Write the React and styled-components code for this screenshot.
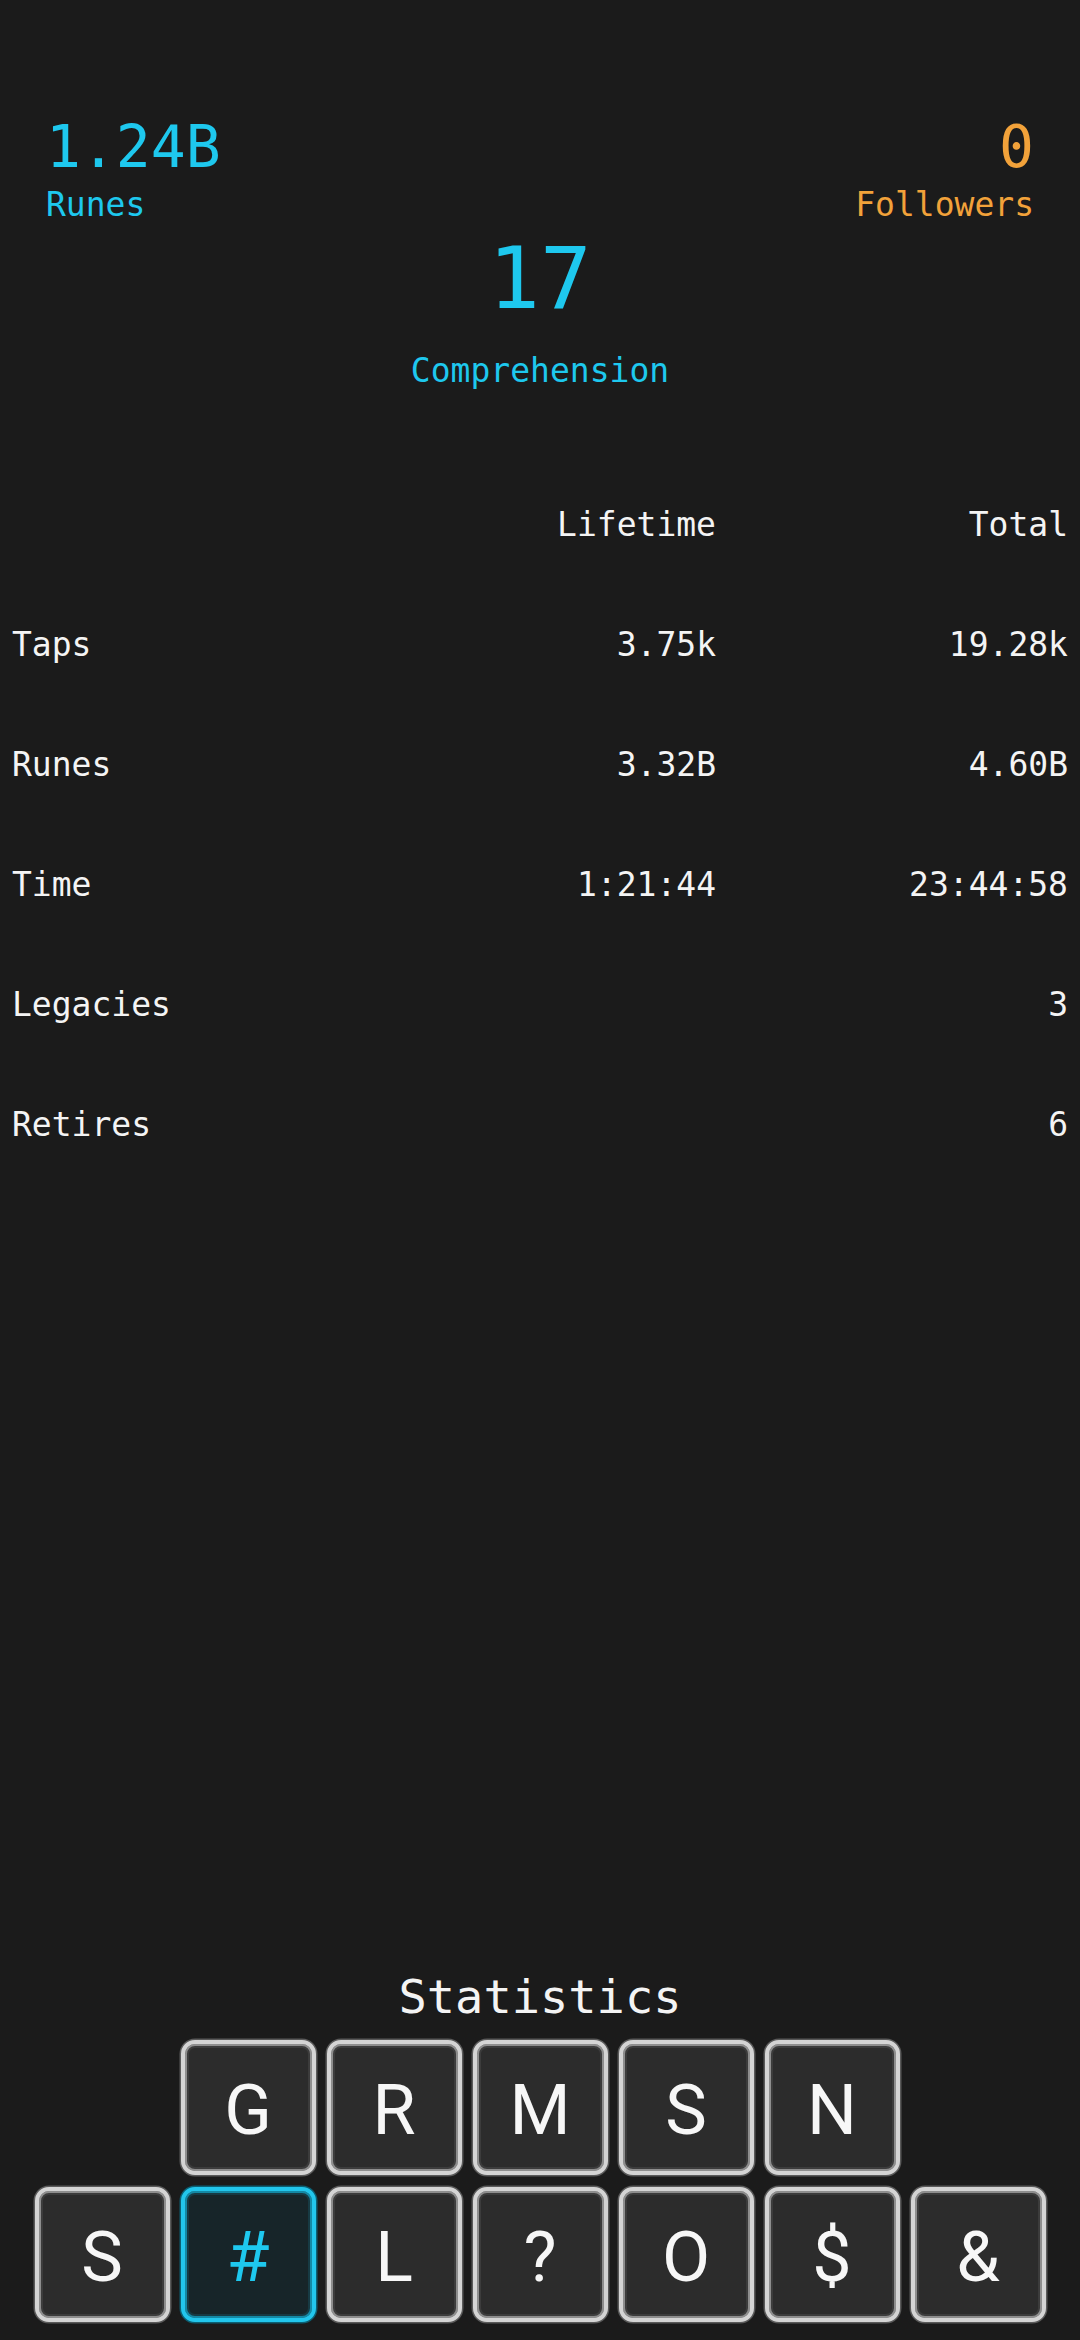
import React from "react";
import styled, { createGlobalStyle } from "styled-components";

const CYAN = "#1ec8ee";
const ORANGE = "#f2a23a";

const GlobalStyle = createGlobalStyle`
  html, body {
    margin: 0;
    padding: 0;
    background: #1b1b1b;
  }
  body {
    font-family: "DejaVu Sans Mono", "Liberation Mono", monospace;
    color: #f2f2f2;
  }
`;

const Screen = styled.div`
  min-height: 2340px;
  display: flex;
  flex-direction: column;
  box-sizing: border-box;
  padding-top: 118px;
`;

const TopRow = styled.div`
  display: flex;
  justify-content: space-between;
  padding: 0 46px 0 46px;
`;

const Stat = styled.div`
  display: flex;
  flex-direction: column;
  align-items: ${(p) => (p.$align === "right" ? "flex-end" : p.$align === "center" ? "center" : "flex-start")};
  gap: ${(p) => p.$gap || 12}px;
  color: ${(p) => p.$color};
`;

const Value = styled.div`
  font-size: ${(p) => p.$size}px;
  line-height: 1;
`;

const Label = styled.div`
  font-size: 33px;
  line-height: 1;
`;

const Center = styled.div`
  margin-top: 14px;
  display: flex;
  justify-content: center;
`;

const Table = styled.div`
  margin-top: 77px;
  padding: 0 12px;
  display: flex;
  flex-direction: column;
`;

const Row = styled.div`
  display: grid;
  grid-template-columns: 1fr 1fr 1fr;
  align-items: center;
  height: 120px;
  font-size: 33px;
  line-height: 1;
  color: #f4f4f4;
`;

const Cell = styled.div`
  text-align: ${(p) => (p.$right ? "right" : "left")};
`;

const Spacer = styled.div`
  flex: 1;
`;

const Footer = styled.div`
  display: flex;
  flex-direction: column;
  align-items: center;
  padding-bottom: 18px;
`;

const Title = styled.div`
  font-size: 47px;
  line-height: 1;
  color: #f4f4f4;
  margin-bottom: 20px;
`;

const KeyRow = styled.div`
  display: flex;
  gap: 11px;
  & + & {
    margin-top: 12px;
  }
`;

const Key = styled.button`
  width: 135px;
  height: 135px;
  box-sizing: border-box;
  border-radius: 14px;
  border: 4px solid ${(p) => (p.$active ? "#22c6ec" : "#d4d4d4")};
  background: ${(p) => (p.$active ? "#172529" : "#2c2c2c")};
  box-shadow: 0 0 0 1.5px ${(p) => (p.$active ? "#0d5f72" : "#5a5a5a")},
    inset 0 0 0 2px ${(p) => (p.$active ? "#1489a5" : "#8e8e8e")},
    inset 0 0 0 4px ${(p) => (p.$active ? "#173a43" : "#3c3c3c")};
  color: ${(p) => (p.$active ? CYAN : "#f7f7f7")};
  font-family: Roboto, "Noto Sans", sans-serif;
  font-size: 70px;
  line-height: 1;
  padding: 4px 0 0;
  display: flex;
  align-items: center;
  justify-content: center;
  cursor: pointer;
`;

const rows = [
  ["Taps", "3.75k", "19.28k"],
  ["Runes", "3.32B", "4.60B"],
  ["Time", "1:21:44", "23:44:58"],
  ["Legacies", "", "3"],
  ["Retires", "", "6"],
];

const topKeys = ["G", "R", "M", "S", "N"];
const bottomKeys = ["S", "#", "L", "?", "O", "$", "&"];

export default function App() {
  return (
    <>
      <GlobalStyle />
      <Screen>
        <TopRow>
          <Stat $color={CYAN}>
            <Value $size={58}>1.24B</Value>
            <Label>Runes</Label>
          </Stat>
          <Stat $color={ORANGE} $align="right">
            <Value $size={58}>0</Value>
            <Label>Followers</Label>
          </Stat>
        </TopRow>
        <Center>
          <Stat $color={CYAN} $align="center" $gap={33}>
            <Value $size={86}>17</Value>
            <Label>Comprehension</Label>
          </Stat>
        </Center>

        <Table>
          <Row>
            <Cell />
            <Cell $right>Lifetime</Cell>
            <Cell $right>Total</Cell>
          </Row>
          {rows.map(([name, life, total]) => (
            <Row key={name}>
              <Cell>{name}</Cell>
              <Cell $right>{life}</Cell>
              <Cell $right>{total}</Cell>
            </Row>
          ))}
        </Table>

        <Spacer />

        <Footer>
          <Title>Statistics</Title>
          <KeyRow>
            {topKeys.map((k, i) => (
              <Key key={i}>{k}</Key>
            ))}
          </KeyRow>
          <KeyRow>
            {bottomKeys.map((k, i) => (
              <Key key={i} $active={k === "#"}>
                {k}
              </Key>
            ))}
          </KeyRow>
        </Footer>
      </Screen>
    </>
  );
}
